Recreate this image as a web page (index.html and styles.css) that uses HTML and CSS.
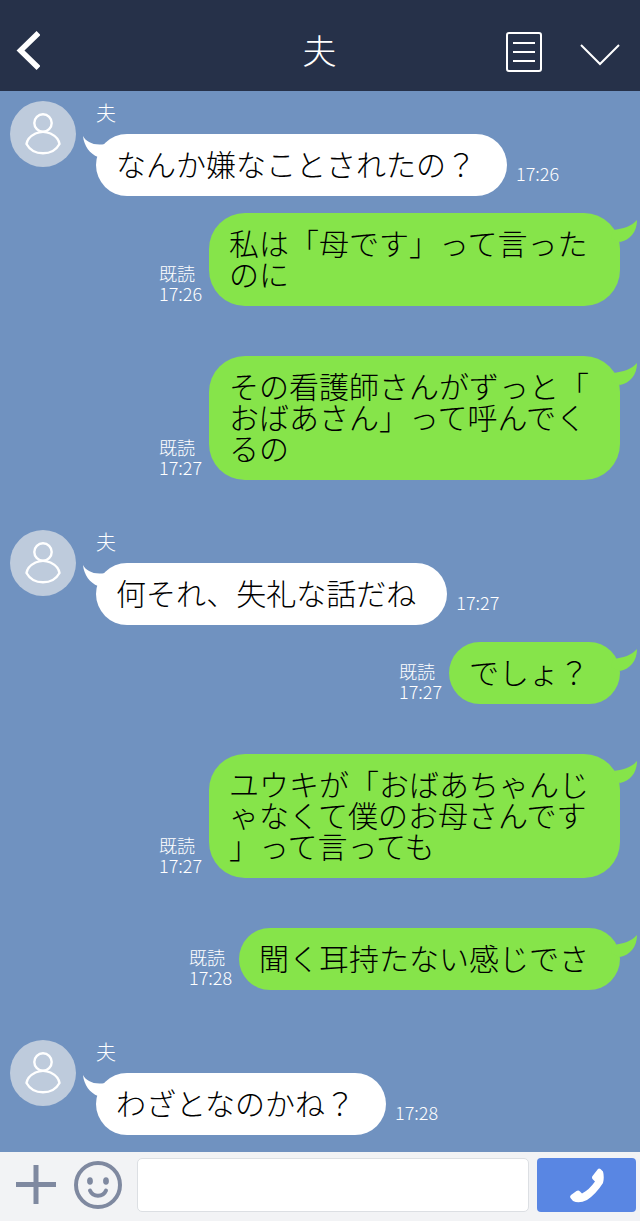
FILE: index.html
```html
<!DOCTYPE html>
<html lang="ja">
<head>
    <meta charset="utf-8">
    <meta name="viewport" content="width=device-width, initial-scale=1">
    <title>夫</title>
    <link rel="stylesheet" href="styles.css">
</head>

<body>
    <!-- shared shapes -->
    <svg class="defs" aria-hidden="true">
        <symbol id="avatar" viewBox="0 0 66 66">
            <circle cx="33" cy="33" r="33" fill="#becbdc"/>
            <g fill="none" stroke="#fff" stroke-width="2.4">
                <circle cx="33" cy="22" r="8.7"/>
                <path d="M25.500 32.500C20.500 35 17 39.500 16.500 43C19.500 48.500 25.500 52.300 33 52.300S46.500 48.500 49.500 43C49 39.500 45.500 35 40.500 32.500C36 30.500 30 30.500 25.500 32.500Z"/>
            </g>
        </symbol>
        <symbol id="tail-left" viewBox="0 0 30 24">
            <path d="M0 0C3 6 11 10 22 8L26 16L15 21C7 18 1 10 0 0Z"/>
        </symbol>
        <symbol id="tail-right" viewBox="0 0 30 24">
            <path d="M30 0C25 6 16 9 6 10L4 18L13 22C23 20 30 12 30 0Z"/>
        </symbol>
    </svg>

    <header class="header">
        <button type="button" class="icon-btn back" aria-label="戻る">
            <svg width="26" height="42" viewBox="0 0 26 42"><path d="M24.500 2L6.500 19.500L24.500 37" fill="none" stroke="#fff" stroke-width="5.500"/></svg>
        </button>
        <h1 class="title">夫</h1>
        <div class="header-menu">
            <button type="button" class="icon-btn" aria-label="ノート">
                <svg width="36" height="40" viewBox="0 0 36 40"><g fill="none" stroke="#fff" stroke-width="2"><rect x="1" y="1" width="34" height="38" rx="2"/><path d="M7 11H29M7 20H29M7 29H29"/></g></svg>
            </button>
            <button type="button" class="icon-btn" aria-label="メニュー">
                <svg width="40" height="40" viewBox="0 0 40 40"><path d="M1 13L20 32L39 13" fill="none" stroke="#fff" stroke-width="2"/></svg>
            </button>
        </div>
    </header>

    <main class="chat">
        <div class="msg in">
            <svg class="avatar"><use href="#avatar"/></svg>
            <div class="content">
                <div class="name">夫</div>
                <div class="row">
                    <div class="bubble"><svg class="tail"><use href="#tail-left"/></svg><p class="text">なんか嫌なことされたの？</p></div>
                    <div class="meta">17:26</div>
                </div>
            </div>
        </div>

        <div class="msg out">
            <div class="meta">既読<br>17:26</div>
            <div class="bubble"><svg class="tail"><use href="#tail-right"/></svg><p class="text">私は「母です」って言ったのに</p></div>
        </div>

        <div class="msg out">
            <div class="meta">既読<br>17:27</div>
            <div class="bubble"><svg class="tail"><use href="#tail-right"/></svg><p class="text">その看護師さんがずっと「おばあさん」って呼んでくるの</p></div>
        </div>

        <div class="msg in">
            <svg class="avatar"><use href="#avatar"/></svg>
            <div class="content">
                <div class="name">夫</div>
                <div class="row">
                    <div class="bubble"><svg class="tail"><use href="#tail-left"/></svg><p class="text">何それ、失礼な話だね</p></div>
                    <div class="meta">17:27</div>
                </div>
            </div>
        </div>

        <div class="msg out">
            <div class="meta">既読<br>17:27</div>
            <div class="bubble"><svg class="tail"><use href="#tail-right"/></svg><p class="text">でしょ？</p></div>
        </div>

        <div class="msg out">
            <div class="meta">既読<br>17:27</div>
            <div class="bubble"><svg class="tail"><use href="#tail-right"/></svg><p class="text">ユウキが「おばあちゃんじゃなくて僕のお母さんです」って言っても</p></div>
        </div>

        <div class="msg out">
            <div class="meta">既読<br>17:28</div>
            <div class="bubble"><svg class="tail"><use href="#tail-right"/></svg><p class="text">聞く耳持たない感じでさ</p></div>
        </div>

        <div class="msg in">
            <svg class="avatar"><use href="#avatar"/></svg>
            <div class="content">
                <div class="name">夫</div>
                <div class="row">
                    <div class="bubble"><svg class="tail"><use href="#tail-left"/></svg><p class="text">わざとなのかね？</p></div>
                    <div class="meta">17:28</div>
                </div>
            </div>
        </div>
    </main>

    <footer class="footer">
        <button type="button" class="icon-btn" aria-label="追加">
            <svg width="40" height="40" viewBox="0 0 40 40"><path d="M20 0V39M0 19.500H40" stroke="#7f89a0" stroke-width="5"/></svg>
        </button>
        <button type="button" class="icon-btn" aria-label="スタンプ">
            <svg width="48" height="48" viewBox="0 0 48 48">
                <circle cx="24" cy="24" r="22" fill="none" stroke="#7f89a0" stroke-width="4"/>
                <ellipse cx="16" cy="20" rx="2.900" ry="3.800" fill="#7f89a0"/>
                <ellipse cx="32" cy="20" rx="2.900" ry="3.800" fill="#7f89a0"/>
                <path d="M16 29.500C19 36.500 29 36.500 32 29.500" fill="none" stroke="#7f89a0" stroke-width="4" stroke-linecap="round"/>
            </svg>
        </button>
        <input type="text" class="message-input" aria-label="メッセージ">
        <button type="button" class="call" aria-label="通話">
            <svg width="36" height="36" viewBox="0 0 36 36"><path d="M29 2Q30 1 31.500 2L34 4.500Q35.500 10 34 16Q27 27 18 33Q10 37 4 34L1.500 31Q0.500 29.500 2 28L7.500 24Q9.500 23 11 24.500L13 26.500Q20 23 26 14.500L23.500 12Q22.500 10.500 23.500 9Z" fill="#fff"/></svg>
        </button>
    </footer>
</body>
</html>
```
FILE: styles.css
```css
* {
    box-sizing: border-box;
}

body {
    display: flex;
    flex-direction: column;
    min-height: 100vh;
    margin: 0;
    background-color: #7092c0;
    font-family: "Noto Sans CJK JP", sans-serif;
    font-weight: 300;
}

svg {
    display: block;
}

.defs {
    position: absolute;
    width: 0;
    height: 0;
}

.icon-btn {
    padding: 0;
    border: none;
    background: none;
    cursor: pointer;
}

/* header */
.header {
    display: grid;
    grid-template-columns: 1fr auto 1fr;
    align-items: center;
    padding: 13px 20px 0 14px;
    height: 91px;
    background-color: #263149;
    color: #fff;
}

.back {
    justify-self: start;
}

.title {
    margin: 0;
    padding: 0 0 5px 5px;
    font-size: 34px;
    line-height: 40px;
    font-weight: 300;
}

.header-menu {
    display: flex;
    justify-content: flex-end;
    gap: 38px;
}

/* messages */
.chat {
    flex: 1;
    padding: 10px 20px 0 10px;
}

.msg {
    display: flex;
}

.in {
    align-items: flex-start;
    gap: 20px;
    margin-bottom: 17px;
}

.out {
    justify-content: flex-end;
    align-items: flex-end;
    gap: 5px;
    margin-bottom: 50px;
}

.avatar {
    flex: none;
    width: 66px;
    height: 66px;
}

.name {
    height: 33px;
    color: #fff;
    font-size: 20px;
    line-height: 24px;
}

.row {
    display: flex;
    align-items: flex-end;
    gap: 9px;
}

.meta {
    flex: none;
    min-width: 45px;
    padding-bottom: 3px;
    color: #fff;
    font-size: 18px;
    line-height: 20px;
}

.in .meta {
    padding-bottom: 13px;
}

.bubble {
    position: relative;
    padding: 14px 31px 17px 20px;
    border-radius: 36px;
    background-color: #fff;
    fill: #fff;
}

.out .bubble {
    background-color: #86e44a;
    fill: #86e44a;
}

.text {
    max-width: 360px;
    margin: 0;
    color: #000;
    font-size: 30px;
    line-height: 31px;
    line-break: anywhere;
    text-spacing-trim: space-all;
}

.tail {
    position: absolute;
    top: 2px;
    left: -13px;
    width: 30px;
    height: 24px;
}

.out .tail {
    top: 7px;
    left: auto;
    right: -17px;
}

/* input bar */
.footer {
    display: flex;
    align-items: center;
    padding: 6px 4px 9px 16px;
    background-color: #f2f3f5;
}

.message-input {
    flex: 1;
    min-width: 0;
    height: 54px;
    margin: 0 8px 0 15px;
    padding: 0 12px;
    border: 1px solid #dcdfe3;
    border-radius: 5px;
    background-color: #fff;
    font: inherit;
    font-size: 30px;
}

.footer .icon-btn + .icon-btn {
    margin-left: 18px;
}

.call {
    display: flex;
    align-items: center;
    justify-content: center;
    width: 99px;
    height: 54px;
    border: none;
    border-radius: 4px;
    background-color: #5986e3;
    cursor: pointer;
}
```
